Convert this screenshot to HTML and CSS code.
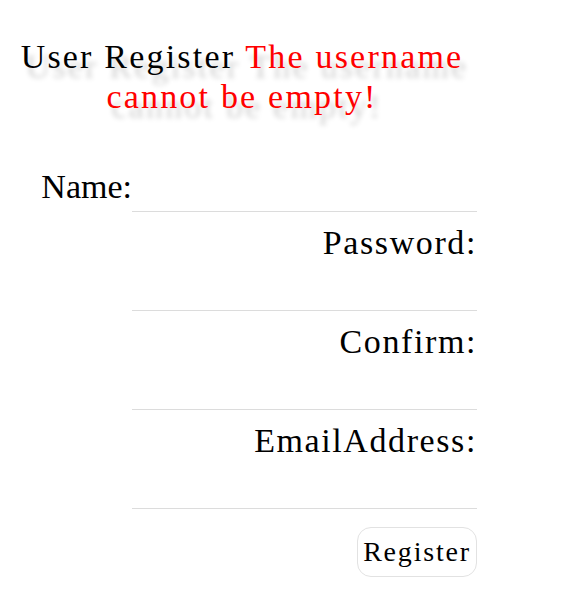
FILE: index.html
```html
<!DOCTYPE html>
<html>
<head>
<meta charset="utf-8">
<link rel="stylesheet" href="styles.css">
</head>
<body>
<div class="title"><span class="title-main">User Register</span> <span class="title-error">The username cannot be empty!</span></div>
<form class="form">
  <div class="row-first">
    <label class="label label-name">Name:</label>
    <input class="field field-first" type="text">
  </div>
  <div class="group">
    <label class="label">Password:</label>
    <input class="field" type="password">
  </div>
  <div class="group">
    <label class="label">Confirm:</label>
    <input class="field" type="password">
  </div>
  <div class="group">
    <label class="label">EmailAddress:</label>
    <input class="field" type="text">
  </div>
  <button class="submit" type="button">Register</button>
</form>
</body>
</html>
```
FILE: styles.css
```css
html, body {
  margin: 0;
  padding: 0;
  background: #fff;
}
body {
  font-family: "Liberation Serif", "DejaVu Serif", serif;
  color: #000;
}
.title {
  margin-top: 37px;
  width: 484px;
  text-align: center;
  font-size: 34px;
  letter-spacing: 2.2px;
  line-height: 40px;
  text-shadow: 5px 10px 5px rgba(0, 0, 0, 0.18);
}
.title-error {
  color: #ff0000;
}
.form {
  margin-top: 50px;
  width: 477px;
  display: flex;
  flex-direction: column;
  align-items: flex-end;
}
.label {
  font-size: 34px;
  letter-spacing: 1.6px;
  line-height: 40px;
  white-space: nowrap;
}
.label-name {
  letter-spacing: 0;
}
.row-first {
  display: flex;
  align-items: flex-start;
  margin-bottom: 11px;
}
.group {
  display: flex;
  flex-direction: column;
  align-items: flex-end;
  margin-bottom: 11px;
}
.field {
  box-sizing: border-box;
  width: 345px;
  height: 48px;
  margin: 0;
  padding: 0;
  border: none;
  border-bottom: 1px solid #dcdcdc;
  outline: none;
  background: transparent;
  font-family: inherit;
  font-size: 24px;
}
.field-first {
  height: 45px;
}
.submit {
  margin-top: 7px;
  box-sizing: border-box;
  width: 120px;
  height: 50px;
  padding: 0;
  background: #fff;
  border: 1px solid #e2e2e2;
  border-radius: 14px;
  font-family: "Liberation Serif", "DejaVu Serif", serif;
  font-size: 28px;
  letter-spacing: 1.8px;
  color: #000;
}
```
